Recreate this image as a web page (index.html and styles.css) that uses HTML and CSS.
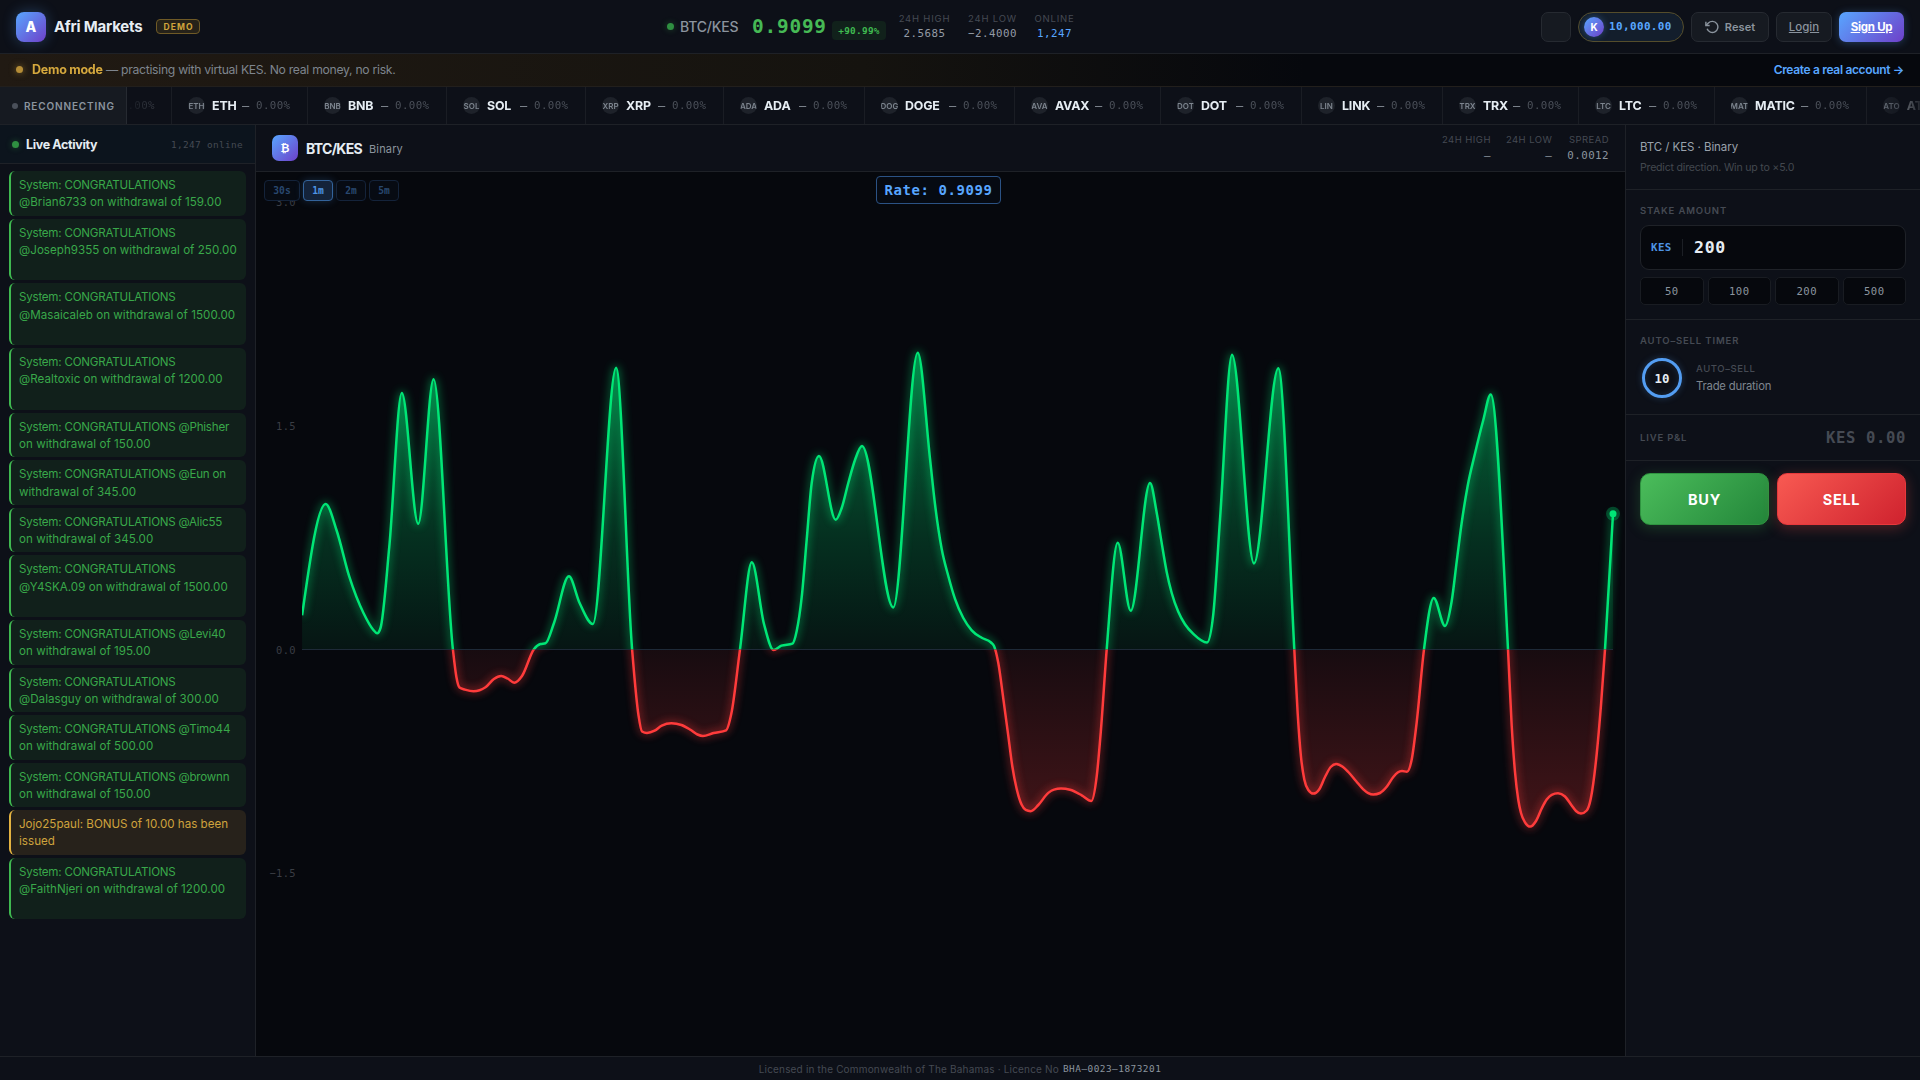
FILE: index.html
```html
<!DOCTYPE html>
<html lang="en">
<head>
<meta charset="utf-8">
<title>Afri Markets</title>
<link rel="stylesheet" href="styles.css">
</head>
<body>
<header class="topbar">
  <div class="brand">
    <span class="logo">A</span>
    <span class="brand-name">Afri Markets</span>
    <span class="demo-badge">DEMO</span>
  </div>
  <div class="quote">
    <i class="dot dot-green"></i>
    <span class="quote-pair">BTC/KES</span>
    <span class="quote-price">0.9099</span>
    <span class="quote-change">+90.99%</span>
    <div class="stat stat-high"><span>24H HIGH</span><b>2.5685</b></div>
    <div class="stat stat-low"><span>24H LOW</span><b>−2.4000</b></div>
    <div class="stat stat-online"><span>ONLINE</span><b class="blue">1,247</b></div>
  </div>
  <div class="actions">
    <span class="icon-btn"></span>
    <span class="balance"><i class="coin">K</i>10,000.00</span>
    <span class="btn btn-reset"><svg width="14" height="14" viewBox="0 0 24 24" fill="none" stroke="currentColor" stroke-width="2.4"><path d="M1.5 3v6.5h6.5"/><path d="M3.6 15a9.5 9.5 0 1 0 2.2-9.8L1.5 9.5"/></svg><span>Reset</span></span>
    <a class="btn btn-login">Login</a>
    <a class="btn btn-signup">Sign Up</a>
  </div>
</header>

<div class="banner">
  <i class="dot dot-gold"></i>
  <strong>Demo mode</strong>
  <span class="banner-text">— practising with virtual KES. No real money, no risk.</span>
  <a class="banner-link">Create a real account →</a>
</div>

<div class="ticker">
  <div class="ticker-status"><i></i><span>RECONNECTING</span></div>
  <div class="ticker-track" id="ticker"></div>
</div>

<main class="workspace">
  <aside class="activity">
    <div class="activity-head"><i class="dot dot-green"></i><h2>Live Activity</h2><span>1,247 online</span></div>
    <div class="feed">
      <p class="msg">System: CONGRATULATIONS<br>@Brian6733 on withdrawal of 159.00</p>
      <p class="msg tall">System: CONGRATULATIONS<br>@Joseph9355 on withdrawal of 250.00</p>
      <p class="msg tall">System: CONGRATULATIONS<br>@Masaicaleb on withdrawal of 1500.00</p>
      <p class="msg tall">System: CONGRATULATIONS<br>@Realtoxic on withdrawal of 1200.00</p>
      <p class="msg">System: CONGRATULATIONS @Phisher<br>on withdrawal of 150.00</p>
      <p class="msg">System: CONGRATULATIONS @Eun on<br>withdrawal of 345.00</p>
      <p class="msg">System: CONGRATULATIONS @Alic55<br>on withdrawal of 345.00</p>
      <p class="msg tall">System: CONGRATULATIONS<br>@Y4SKA.09 on withdrawal of 1500.00</p>
      <p class="msg">System: CONGRATULATIONS @Levi40<br>on withdrawal of 195.00</p>
      <p class="msg">System: CONGRATULATIONS<br>@Dalasguy on withdrawal of 300.00</p>
      <p class="msg">System: CONGRATULATIONS @Timo44<br>on withdrawal of 500.00</p>
      <p class="msg">System: CONGRATULATIONS @brownn<br>on withdrawal of 150.00</p>
      <p class="msg bonus">Jojo25paul: BONUS of 10.00 has been<br>issued</p>
      <p class="msg tall">System: CONGRATULATIONS<br>@FaithNjeri on withdrawal of 1200.00</p>
    </div>
  </aside>

  <section class="market">
    <div class="market-head">
      <span class="coin-logo">₿</span>
      <h1>BTC/KES</h1><span class="kind">Binary</span>
      <div class="mstats">
        <div><span>24H HIGH</span><b>—</b></div>
        <div><span>24H LOW</span><b>—</b></div>
        <div><span>SPREAD</span><b>0.0012</b></div>
      </div>
    </div>
    <div class="chart">
      <svg id="plot" width="1369" height="884" viewBox="256 172 1369 884">
        <defs>
          <linearGradient id="up" gradientUnits="userSpaceOnUse" x1="0" y1="202" x2="0" y2="649.5">
            <stop offset="0" stop-color="#00e676" stop-opacity=".7"/>
            <stop offset=".4" stop-color="#00e676" stop-opacity=".42"/>
            <stop offset=".75" stop-color="#00e676" stop-opacity=".18"/>
            <stop offset="1" stop-color="#00e676" stop-opacity=".06"/>
          </linearGradient>
          <linearGradient id="down" gradientUnits="userSpaceOnUse" x1="0" y1="649.5" x2="0" y2="873">
            <stop offset="0" stop-color="#ff3b3b" stop-opacity=".07"/>
            <stop offset="1" stop-color="#ff3b3b" stop-opacity=".29"/>
          </linearGradient>
          <clipPath id="above"><rect x="302" y="172" width="1323" height="477.5"/></clipPath>
          <clipPath id="below"><rect x="302" y="649.5" width="1323" height="400"/></clipPath>
          <filter id="glow" filterUnits="userSpaceOnUse" x="256" y="172" width="1369" height="884"><feGaussianBlur stdDeviation="4"/></filter>
        </defs>
        <g class="axis">
          <text x="296" y="205.5">3.0</text>
          <text x="296" y="429.5">1.5</text>
          <text x="296" y="653.5">0.0</text>
          <text x="296" y="877">−1.5</text>
        </g>
        <g clip-path="url(#above)"><path class="area" fill="url(#up)"/><path class="line halo up"/></g>
        <g clip-path="url(#below)"><path class="area" fill="url(#down)"/><path class="line halo down"/></g>
        <path class="zero" d="M302 649.5H1613"/>
        <g clip-path="url(#above)"><path class="line up"/></g>
        <g clip-path="url(#below)"><path class="line down"/></g>
        <circle cx="1613" cy="513.7" r="7" fill="#00e676" fill-opacity=".28"/>
        <circle cx="1613" cy="513.7" r="3.5" fill="#00e676"/>
      </svg>
      <div class="frames"><span>30s</span><span class="on">1m</span><span>2m</span><span>5m</span></div>
      <div class="rate">Rate: 0.9099</div>
    </div>
  </section>

  <aside class="trade">
    <div class="trade-head"><b>BTC / KES · Binary</b><span>Predict direction. Win up to ×5.0</span></div>
    <div class="stake">
      <h3>STAKE AMOUNT</h3>
      <div class="stake-input"><span>KES</span><b>200</b></div>
      <div class="chips"><span>50</span><span>100</span><span>200</span><span>500</span></div>
    </div>
    <div class="timer">
      <h3>AUTO–SELL TIMER</h3>
      <div class="timer-row"><div class="ring">10</div><div class="timer-text"><span>AUTO–SELL</span><b>Trade duration</b></div></div>
    </div>
    <div class="pnl"><h3>LIVE P&amp;L</h3><b>KES 0.00</b></div>
    <div class="orders"><span class="buy">BUY</span><span class="sell">SELL</span></div>
  </aside>
</main>

<footer class="foot"><span>Licensed in the Commonwealth of The Bahamas · Licence No</span><b>BHA–0023–1873201</b></footer>
<script src="app.js"></script>
</body>
</html>
```
FILE: styles.css
```css
* { box-sizing: border-box; margin: 0; padding: 0; }
:root {
  --panel: #0d1018;
  --line: #1e2127;
  --text: #e6edf3;
  --muted: #8b949e;
  --dim: #454a53;
  --blue: #58a6ff;
  --green: #3fb950;
  --gold: #e3b341;
  --mono: "DejaVu Sans Mono", "Liberation Mono", monospace;
  --brandfill: linear-gradient(135deg, #58a6ff, #6e40c9);
}
html, body { width: 1920px; height: 1080px; overflow: hidden; }
body { display: flex; flex-direction: column; background: #06080d; color: var(--text); font-family: Inter, sans-serif; font-size: 12px; }
i { font-style: normal; }
.dot { width: 7px; height: 7px; border-radius: 50%; flex: none; }
.dot-green { background: #2f8f41; box-shadow: 0 0 6px rgba(63,185,80,.35); }
.dot-gold { background: #b58d37; box-shadow: 0 0 7px rgba(227,179,65,.5); }
.blue { color: var(--blue); }

.topbar { height: 54px; flex: none; display: grid; grid-template-columns: 667px 1fr auto; align-items: center; background: var(--panel); border-bottom: 1px solid var(--line); padding-right: 16px; }
.brand { display: flex; align-items: center; padding-left: 16px; }
.logo { width: 30px; height: 30px; border-radius: 8px; background: var(--brandfill); display: grid; place-items: center; font-weight: 800; font-size: 14px; color: #fff; box-shadow: 0 0 14px rgba(88,166,255,.3); }
.brand-name { margin-left: 8px; width: 88px; font-size: 15px; font-weight: 700; letter-spacing: -.22px; white-space: nowrap; }
.demo-badge { margin-left: 14px; width: 44px; height: 15px; border: 1px solid #6f5a26; border-radius: 4px; background: #262219; color: #d0a43c; font-size: 8.5px; font-weight: 700; letter-spacing: 1.1px; display: grid; place-items: center; padding-left: 1px; }
.quote { display: flex; align-items: center; white-space: nowrap; }
.quote-pair { margin-left: 6px; width: 72px; font-size: 14px; font-weight: 500; color: var(--muted); letter-spacing: -.2px; }
.quote-price { width: 80px; font: 700 19.4px var(--mono); letter-spacing: .8px; color: #46b955; }
.quote-change { width: 54px; height: 19px; margin-top: 7px; border-radius: 4px; background: #11211b; color: var(--green); font: 700 9.4px var(--mono); letter-spacing: .3px; display: grid; place-items: center; }
.stat { display: flex; flex-direction: column; align-items: center; gap: 2px; font-size: 9.5px; letter-spacing: .8px; line-height: 12px; color: var(--dim); }
.stat b { font: 400 10.8px/14px var(--mono); letter-spacing: .5px; color: #949ba5; }
.stat b.blue { color: var(--blue); }
.stat-high { width: 49px; margin-left: 14px; }
.stat-low { width: 49px; margin-left: 19px; }
.stat-online { width: 41px; margin-left: 17px; }
.actions { display: flex; gap: 7px; }
.icon-btn, .btn { height: 30px; border: 1px solid #262a31; border-radius: 7px; background: #161a21; }
.icon-btn { width: 30px; }
.balance { width: 106px; height: 30px; display: flex; align-items: center; gap: 5px; padding-left: 5px; border: 1px solid #554d2b; border-radius: 15px; background: #131e2c; color: var(--blue); font: 700 10.9px var(--mono); letter-spacing: .42px; }
.coin { width: 20px; height: 20px; border-radius: 50%; background: var(--brandfill); color: #fff; font: 700 10px Inter, sans-serif; letter-spacing: 0; display: grid; place-items: center; box-shadow: 0 0 7px rgba(88,166,255,.35); }
.btn { display: flex; align-items: center; justify-content: center; font-size: 11.5px; font-weight: 500; color: var(--muted); }
.btn-reset { width: 78px; gap: 6px; font-weight: 600; font-size: 11px; letter-spacing: .1px; }
.btn-login { width: 56px; text-decoration: underline; }
.btn-signup { width: 65px; border: 0; background: var(--brandfill); color: #fff; font-weight: 700; letter-spacing: -.25px; text-decoration: underline; box-shadow: 0 1px 8px rgba(88,166,255,.3); }

.banner { height: 33px; flex: none; display: flex; align-items: center; padding: 0 16px 1px; border-bottom: 1px solid #221f1c; background: linear-gradient(90deg, #211a13, #15130f 45%, #06080d 68%); font-size: 12.5px; white-space: nowrap; }
.banner strong { margin-left: 9px; width: 74px; color: var(--gold); font-weight: 700; letter-spacing: -.25px; font-size: 12.5px; opacity: .93; }
.banner-text { color: #7e858e; font-size: 12.2px; letter-spacing: -.29px; }
.banner-link { margin-left: auto; color: var(--blue); font-weight: 600; font-size: 12px; letter-spacing: -.33px; }

.ticker { height: 38px; flex: none; display: flex; background: var(--panel); border-bottom: 1px solid var(--line); }
.ticker-status { width: 127px; flex: none; display: flex; align-items: center; gap: 6px; padding-left: 12px; background: #161a21; border-right: 1px solid #262a31; color: var(--muted); font-size: 10px; font-weight: 600; letter-spacing: .85px; }
.ticker-status i { width: 6px; height: 6px; border-radius: 50%; background: #4a505a; }
.ticker-track { flex: 1; display: flex; overflow: hidden; -webkit-mask-image: linear-gradient(90deg, rgba(0,0,0,.1), #000 45px, #000 1745px, rgba(0,0,0,.1)); mask-image: linear-gradient(90deg, rgba(0,0,0,.1), #000 45px, #000 1745px, rgba(0,0,0,.1)); }
.tick { flex: none; display: flex; align-items: center; padding-left: 16px; border-right: 1px solid #1a1d24; white-space: nowrap; }
.tick-ico { width: 17px; height: 17px; border-radius: 50%; background: #1e222a; color: #7d858f; font-size: 8px; font-weight: 600; display: flex; align-items: center; justify-content: center; overflow: hidden; }
.tick b { margin: 0 auto 0 7px; font-size: 12.4px; font-weight: 700; letter-spacing: -.15px; }
.tick .dash { width: 8px; margin-right: 6px; color: #8b929b; font: 400 12px var(--mono); }
.tick em { margin-right: 16px; font: 400 10.8px var(--mono); letter-spacing: .4px; width: 35px; color: #4b5059; }

.workspace { flex: 1; min-height: 0; display: grid; grid-template-columns: 256px 1fr 295px; }
.activity { background: var(--panel); border-right: 1px solid var(--line); }
.activity-head { height: 39px; display: flex; align-items: center; padding: 0 12px; background: #0c141d; border-bottom: 1px solid var(--line); }
.activity-head h2 { margin-left: 7px; font-size: 12.5px; font-weight: 700; letter-spacing: -.36px; }
.activity-head span { margin-left: auto; font: 400 9.4px var(--mono); letter-spacing: .35px; color: var(--dim); }
.feed { display: flex; flex-direction: column; gap: 3px; padding: 7px 9px; }
.msg { height: 44.5px; padding: 6px 0 4px 8px; border-left: 2px solid var(--green); border-radius: 6px; background: #11201b; color: #39a84a; font-size: 11.6px; line-height: 17.25px; letter-spacing: .03px; white-space: nowrap; }
.msg::first-line { letter-spacing: -.23px; }
.msg.tall { height: 61.75px; }
.msg.bonus { background: #27221b; border-color: var(--gold); color: #cfa33d; }
.msg.bonus::first-line { letter-spacing: -.01px; }

.market { display: flex; flex-direction: column; min-width: 0; }
.market-head { height: 47px; display: flex; align-items: center; padding: 0 16px; background: var(--panel); border-bottom: 1px solid var(--line); }
.coin-logo { width: 26px; height: 26px; border-radius: 7px; background: var(--brandfill); color: #fff; display: grid; place-items: center; font: 700 11px "DejaVu Sans", sans-serif; }
.market-head h1 { margin-left: 8px; width: 63px; font-size: 14px; font-weight: 700; letter-spacing: -.7px; }
.kind { color: var(--muted); font-size: 11px; letter-spacing: .15px; padding-top: 2px; }
.mstats { margin-left: auto; display: flex; gap: 15px; }
.mstats div { display: flex; flex-direction: column; align-items: flex-end; gap: 2px; font-size: 9.5px; line-height: 13px; letter-spacing: .45px; color: var(--dim); }
.mstats b { font: 400 10.8px/15px var(--mono); letter-spacing: .45px; color: var(--muted); }
.chart { flex: 1; position: relative; overflow: hidden; background: #06080d; }
.chart svg { display: block; }
.axis text { font: 10.4px var(--mono); letter-spacing: .4px; fill: #3a3d44; text-anchor: end; }
.line { fill: none; stroke-width: 2.5; stroke-linejoin: round; }
.up { stroke: #00e676; }
.down { stroke: #ff3b3b; }
.halo { stroke-width: 4; filter: url(#glow); opacity: .55; }
.zero { stroke: #1e2a38; stroke-width: 1; }
.frames { position: absolute; left: 8px; top: 8px; display: flex; gap: 3px; }
.frames span { width: 30px; height: 21px; border: 1px solid #14233a; border-radius: 4px; background: #070b13; color: #29486f; font: 700 9.6px var(--mono); display: grid; place-items: center; }
.frames span:first-child { width: 36px; }
.frames .on { border-color: #33639b; background: #14233a; color: #4e94e4; box-shadow: 0 0 9px rgba(88,166,255,.22); }
.rate { position: absolute; left: 620px; top: 4px; width: 125px; height: 28px; border: 1.5px solid #2b5284; border-radius: 4px; background: #060a12; color: var(--blue); font: 700 14px var(--mono); letter-spacing: .57px; display: grid; place-items: center; }

.trade { background: var(--panel); border-left: 1px solid var(--line); }
.trade > div { padding: 0 14px; border-bottom: 1px solid var(--line); }
.trade h3 { font-size: 9.5px; font-weight: 600; color: var(--dim); letter-spacing: .85px; line-height: 12px; }
.trade .trade-head { height: 65px; display: flex; flex-direction: column; gap: 5px; padding-top: 14px; }
.trade-head b { font-size: 11.5px; line-height: 16px; font-weight: 400; color: #9aa2ac; letter-spacing: -.07px; }
.trade-head span { font-size: 10.6px; line-height: 16px; letter-spacing: -.22px; color: #43484f; }
.trade .stake { height: 130px; padding-top: 15px; }
.stake-input { margin-top: 8px; height: 45px; border: 1px solid #1f2228; border-radius: 9px; background: #06080d; display: flex; align-items: center; padding-left: 10px; }
.stake-input span { width: 32px; height: 17px; border-right: 1px solid #1c1f25; color: #4e94e4; font: 700 10.8px/17px var(--mono); letter-spacing: .4px; }
.stake-input b { margin-left: 11px; font: 700 16.5px var(--mono); letter-spacing: .7px; }
.chips { margin-top: 7px; display: grid; grid-template-columns: repeat(4, 1fr); gap: 4px; }
.chips span { height: 28px; border: 1px solid #191c22; border-radius: 5px; background: #06080d; color: var(--muted); font: 400 10.6px var(--mono); letter-spacing: .4px; display: grid; place-items: center; }
.trade .timer { height: 95px; padding-top: 15px; }
.timer-row { display: flex; align-items: center; gap: 14px; margin: 11px 0 0 2px; }
.ring { width: 40px; height: 40px; border-radius: 50%; border: 3px solid #539df2; box-shadow: 0 0 7px rgba(88,166,255,.25), inset 0 0 7px rgba(88,166,255,.15); display: grid; place-items: center; font: 700 12.4px var(--mono); }
.timer-text { display: flex; flex-direction: column; gap: 2px; }
.timer-text span { font-size: 9.5px; font-weight: 500; line-height: 14px; letter-spacing: .6px; color: var(--dim); }
.timer-text b { font-size: 11.3px; font-weight: 400; line-height: 16px; letter-spacing: -.2px; color: #7e858e; }
.trade .pnl { height: 46px; display: flex; align-items: center; justify-content: space-between; }
.pnl b { font: 700 15.6px var(--mono); letter-spacing: .6px; color: #454a53; }
.trade .orders { display: grid; grid-template-columns: 1fr 1fr; gap: 8px; padding-top: 12px; border: 0; }
.orders span { height: 52px; border-radius: 10px; display: grid; place-items: center; font-size: 14.5px; font-weight: 700; color: #fff; letter-spacing: .7px; }
.orders .buy { background: linear-gradient(135deg, #4bbd5b, #23863a); border: 1px solid #2f9440; box-shadow: 0 3px 14px rgba(63,185,80,.25); }
.orders .sell { background: linear-gradient(135deg, #f85a52, #cf222e); border: 1px solid #e8393c; box-shadow: 0 3px 14px rgba(248,81,73,.3); }

.foot { height: 24px; flex: none; display: flex; align-items: center; justify-content: center; gap: 4px; background: var(--panel); border-top: 1px solid var(--line); font-size: 10px; color: var(--dim); letter-spacing: .18px; }
.foot b { font: 400 9.4px var(--mono); letter-spacing: .5px; color: var(--muted); }
```
FILE: app.js
```js
// Ticker: symbol and cell width
const coins = [["", 44], ["ETH", 136], ["BNB", 139], ["SOL", 139], ["XRP", 138], ["ADA", 141], ["DOGE", 150], ["AVAX", 146], ["DOT", 141], ["LINK", 141], ["TRX", 136], ["LTC", 136], ["MATIC", 152], ["ATOM", 142]];
document.getElementById("ticker").innerHTML = coins.map(([s, w]) =>
  s ? `<div class="tick" style="width:${w}px"><span class="tick-ico">${s.slice(0, 3)}</span><b>${s}</b><span class="dash">—</span><em>0.00%</em></div>`
    : `<div class="tick" style="width:${w + 1}px;justify-content:flex-end"><em>0.00%</em></div>`).join("");

// Price curve, drawn with monotone cubic segments
const pts = [[302.1,615.3],[325.7,504],[336.8,531],[349.3,576.7],[363.6,613.3],[373,629.5],[377.1,633.3],[380.5,628],[389.3,546.7],[401.8,393],[418.2,523.7],[433.6,379.3],[452.9,649.3],[456.4,677],[459.5,687.5],[465,689.6],[473.6,691.3],[485.5,687.3],[493.9,679],[501.1,676],[507.5,678.5],[514.3,682.7],[522,676],[533.9,649.3],[540.4,644],[545.5,643.3],[554,623],[568.9,576.3],[579.6,603],[592.9,624],[616.1,367.7],[632.1,649.3],[638.6,716],[642,731.5],[647,733],[654.6,730.7],[661.8,725.6],[671.4,723.3],[681.4,725],[690.4,729.8],[697.5,734.5],[702.9,736],[713.6,733],[726.1,730.3],[731.4,713.3],[740,649.3],[751.8,562.3],[764,624],[773.6,650],[781.4,645.7],[792.4,643.7],[796.7,631],[801.7,597.2],[806.7,539.7],[811.7,483],[819,456],[835.7,519.8],[841.7,508],[848.3,483],[855,460],[862,446],[893.3,607.4],[917.7,352.8],[930,458.6],[935,504.2],[941.7,549],[948.3,576],[955,598.9],[963.3,618],[971.7,630.3],[981.7,637.8],[991,642.5],[994,646],[998.3,663.1],[1003.3,698.6],[1008.3,735.8],[1012.3,766.2],[1016.7,789],[1021.7,804.8],[1025.7,809.9],[1030.7,811.2],[1038.3,805],[1048.3,792.9],[1054,789.6],[1061,788.6],[1070,789.8],[1081.7,795.3],[1091.3,801],[1096.7,776.4],[1100.7,733],[1106.7,649.3],[1117.7,542.8],[1130.7,610.7],[1150,482.9],[1156.7,512.7],[1161.7,543.1],[1166.7,571.9],[1171.7,593],[1178.3,611.8],[1185,624.3],[1193.3,633.9],[1207,642.5],[1213.3,614.1],[1220,519.5],[1232,354.8],[1254,563.4],[1278.3,368.3],[1294.3,649.3],[1297.7,713.8],[1301,757],[1304.3,779.5],[1308.3,790],[1313.3,793.6],[1319.3,789.2],[1325,777],[1330.7,767],[1336.3,764],[1342.7,766.8],[1348.3,772],[1356,781],[1363.3,789.4],[1368.3,793.2],[1373.3,794.6],[1380,793],[1386.7,786.8],[1393.3,777],[1397.7,772.5],[1402,771],[1407,771.8],[1411.7,759.5],[1416.7,722.3],[1424,649.3],[1433.7,597.9],[1445,625.9],[1451.7,601],[1456.7,561.7],[1461.7,522.8],[1467.7,485.7],[1475,453.5],[1483.3,420],[1490.7,394.4],[1508,649.3],[1511.7,725.7],[1515,772],[1518.3,800],[1521,813],[1525,822.4],[1530.3,826.6],[1536,821],[1541.7,808.5],[1546.7,799.6],[1551.7,794.8],[1558,793.3],[1565,796.5],[1571.7,805.5],[1576,811],[1581,813.6],[1586.7,810.5],[1590.7,799],[1596.7,754],[1601,705],[1605,649.3],[1613,513.7]];
const n = pts.length, sl = [], m = [];
for (let i = 0; i < n - 1; i++) sl.push((pts[i + 1][1] - pts[i][1]) / (pts[i + 1][0] - pts[i][0]));
for (let i = 1; i < n - 1; i++) {
  const h0 = pts[i][0] - pts[i - 1][0], h1 = pts[i + 1][0] - pts[i][0];
  const p = (sl[i - 1] * h1 + sl[i] * h0) / (h0 + h1);
  m[i] = (Math.sign(sl[i - 1]) + Math.sign(sl[i])) * Math.min(Math.abs(sl[i - 1]), Math.abs(sl[i]), 0.5 * Math.abs(p)) || 0;
}
m[0] = (3 * sl[0] - m[1]) / 2;
m[n - 1] = sl[n - 2];
let d = `M${pts[0]}`;
for (let i = 0; i < n - 1; i++) {
  const [x0, y0] = pts[i], [x1, y1] = pts[i + 1], k = (x1 - x0) / 3;
  d += `C${x0 + k},${y0 + k * m[i]} ${x1 - k},${y1 - k * m[i + 1]} ${x1},${y1}`;
}
document.querySelectorAll(".line").forEach(e => e.setAttribute("d", d));
document.querySelectorAll(".area").forEach(e => e.setAttribute("d", d + "V649.5H302.1Z"));
```
